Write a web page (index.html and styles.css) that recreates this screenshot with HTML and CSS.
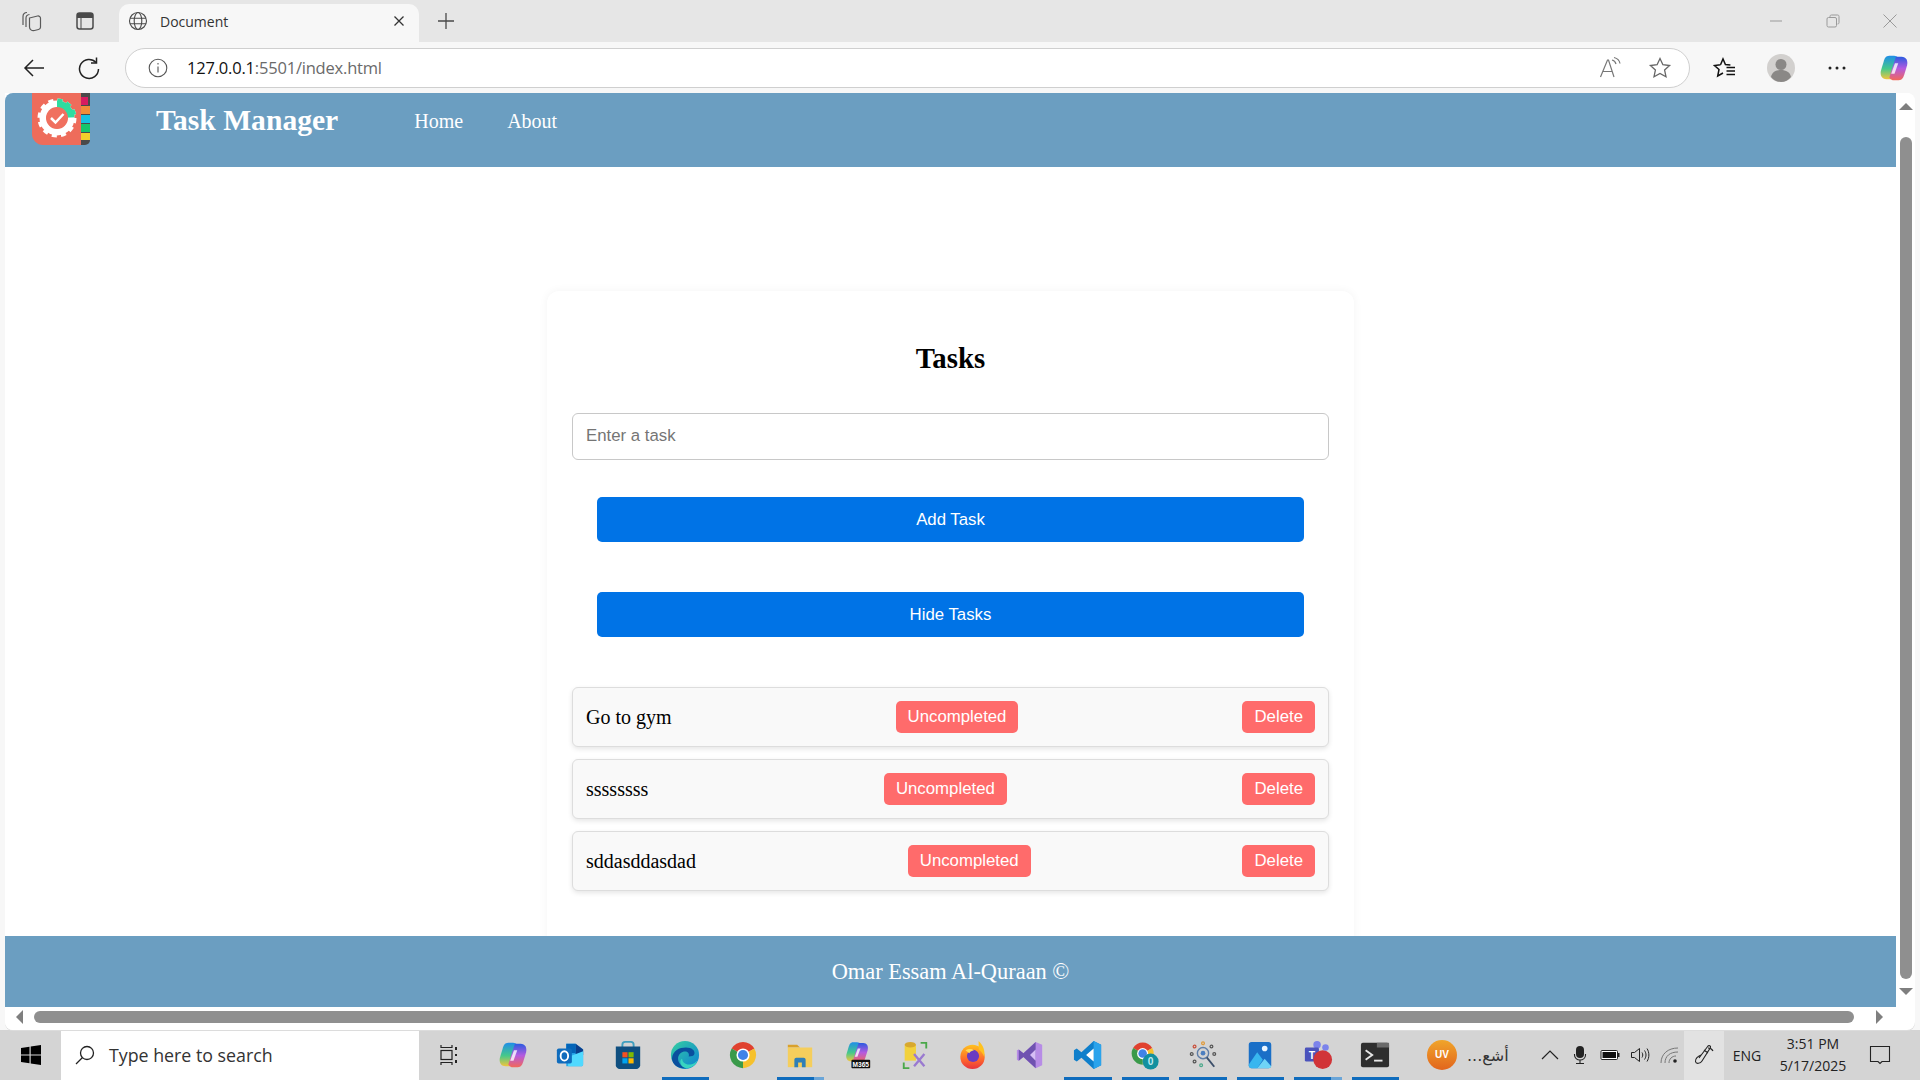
FILE: index.html
```html
<!DOCTYPE html>
<html lang="en">
<head>
<meta charset="utf-8">
<title>Document</title>
<link rel="stylesheet" href="styles.css">
</head>
<body>
<svg class="defs" width="0" height="0" aria-hidden="true">
  <defs>
    <linearGradient id="cpA" x1="0" y1="0" x2="0" y2="1"><stop offset="0" stop-color="#1f8ee8"/><stop offset=".55" stop-color="#46c98a"/><stop offset="1" stop-color="#f2c53d"/></linearGradient>
    <linearGradient id="cpB" x1="0" y1="0" x2="0" y2="1"><stop offset="0" stop-color="#2b5be0"/><stop offset=".5" stop-color="#b45be0"/><stop offset="1" stop-color="#f2685a"/></linearGradient>
    <linearGradient id="edgeA" x1="0" y1="0" x2="1" y2="1"><stop offset="0" stop-color="#35d0a0"/><stop offset="1" stop-color="#0c7fd6"/></linearGradient>
    <linearGradient id="ffA" x1="0" y1="0" x2="0" y2="1"><stop offset="0" stop-color="#ffc21f"/><stop offset=".6" stop-color="#ff6a2b"/><stop offset="1" stop-color="#e8323f"/></linearGradient>
    <clipPath id="gearTeal"><path d="M25 25L25 0H52V24Z"/></clipPath>
    <symbol id="copilot" viewBox="0 0 32 32">
      <path d="M11 3C7 3 6 6 5 9L2 19C1 24 3 28 8 28H14L21 6C20 4 18 3 16 3Z" fill="url(#cpA)"/>
      <path d="M21 29C25 29 26 26 27 23L30 13C31 8 29 4 24 4H18L11 26C12 28 14 29 16 29Z" fill="url(#cpB)"/>
      <path d="M17 11h3.500l-4 11h-3.500z" fill="#fff" opacity=".8"/>
    </symbol>
    <symbol id="chrome" viewBox="0 0 32 32">
      <path d="M16 16L3.900 9A14 14 0 0 1 28.100 9Z" fill="#e0412f"/>
      <path d="M16 16L28.100 9A14 14 0 0 1 16 30Z" fill="#f6c12c"/>
      <path d="M16 16L16 30A14 14 0 0 1 3.900 9Z" fill="#3a9a4a"/>
      <circle cx="16" cy="16" r="7" fill="#fff"/><circle cx="16" cy="16" r="5.400" fill="#3f83e8"/>
    </symbol>
  </defs>
</svg>

<div class="desktop">
  <div class="tabstrip">
    <div class="strip-icons">
      <svg class="ic22" viewBox="0 0 22 22" fill="none" stroke="#5a5a5a" stroke-width="1.200"><path d="M2 15V6.500C2 4 3.500 2.500 6 2.500M5 17V8C5 6 6.500 4.800 8.500 4.500"/><path d="M8.500 8l8-2c1.500-.3 3 .7 3 2.200v9c0 1.200-.8 2-2 2.300l-4 1c-2.800.5-5-1-5-3.500z"/></svg>
      <svg class="ic20" viewBox="0 0 20 20"><rect x="2" y="2" width="16" height="16" rx="2.500" fill="none" stroke="#4a4a4a" stroke-width="1.500"/><path d="M2 4.500C2 3 3 2 4.500 2h11C17 2 18 3 18 4.500V7H2z" fill="#4a4a4a"/><path d="M6 7v11" stroke="#4a4a4a" stroke-width="1"/></svg>
    </div>
    <div class="tab">
      <svg class="ic20" viewBox="0 0 20 20" fill="none" stroke="#4a4a4a" stroke-width="1.100"><circle cx="10" cy="10" r="8.500"/><ellipse cx="10" cy="10" rx="3.800" ry="8.500"/><path d="M2 7.200h16M2 12.800h16"/></svg>
      <span class="tab-title">Document</span>
      <svg class="tab-x" viewBox="0 0 12 12" stroke="#333" stroke-width="1.300"><path d="M1.500 1.500l9 9M10.500 1.500l-9 9"/></svg>
    </div>
    <svg class="tab-plus" viewBox="0 0 18 18" stroke="#4a4a4a" stroke-width="1.300"><path d="M9 1v16M1 9h16"/></svg>
    <div class="win-controls">
      <svg class="wc" viewBox="0 0 16 16" stroke="#9a9a9a" stroke-width="1"><path d="M2 8h12"/></svg>
      <svg class="wc" viewBox="0 0 16 16" fill="none" stroke="#9a9a9a" stroke-width="1"><rect x="2" y="4.500" width="9.500" height="9.500" rx="1.500"/><path d="M5 4.500V3.500C5 2.500 5.500 2 6.500 2h6C13.500 2 14 2.500 14 3.500v6c0 1-.5 1.500-1.500 1.500"/></svg>
      <svg class="wc" viewBox="0 0 16 16" stroke="#9a9a9a" stroke-width="1"><path d="M1.500 1.500l13 13M14.500 1.500l-13 13"/></svg>
    </div>
  </div>

  <div class="toolbar">
    <svg class="tb-ic nav-back" viewBox="0 0 24 24" fill="none" stroke="#222" stroke-width="1.500"><path d="M22 12H3M11 4l-8 8 8 8"/></svg>
    <svg class="tb-ic nav-reload" viewBox="0 0 24 24" fill="none" stroke="#222" stroke-width="1.500"><path d="M19 6.500A9.500 9.500 0 1 0 21.500 13"/><path d="M19.500 1.500v5.500H14"/></svg>
    <div class="omnibox">
      <svg class="ic20" viewBox="0 0 20 20" fill="none" stroke="#555" stroke-width="1.100"><circle cx="10" cy="10" r="8.800"/><path d="M10 8.500v6M10 5v1.500"/></svg>
      <span class="url"><span class="url-host">127.0.0.1</span>:5501/index.html</span>
      <svg class="omni-read" viewBox="0 0 24 24" fill="none" stroke="#777" stroke-width="1.200"><path d="M2.500 21L9.500 4h1L16 21M5 15.500h9"/><path d="M14 4c2 .5 3.500 2 4 4M16 1.500c3 .7 5.500 3 6 6"/></svg>
      <svg class="omni-star" viewBox="0 0 24 24" fill="none" stroke="#666" stroke-width="1.300"><path d="M12 2.500l2.900 6.200 6.700.8-5 4.600 1.400 6.700L12 17.400l-6 3.400 1.400-6.700-5-4.600 6.700-.8z"/></svg>
    </div>
    <div class="tb-right">
      <svg class="tb-ic" viewBox="0 0 24 24" fill="none" stroke="#111" stroke-width="1.500"><path d="M7.500 8.800L10 3l2.400 5.500 5 .4M7.500 8.800L1.500 9.500l4.500 4-1.300 6.500L10 17"/><path d="M13.500 11.500H22M13.500 15H22M13.500 18.500H22"/></svg>
      <div class="avatar"><svg viewBox="0 0 28 28" width="28" height="28"><circle cx="14" cy="14" r="14" fill="#d2d0ce"/><circle cx="14" cy="10.500" r="5.500" fill="#8a8886"/><path d="M4 23c1-5 5-7 10-7s9 2 10 7c-2.500 3-6 5-10 5s-7.500-2-10-5z" fill="#8a8886"/></svg></div>
      <svg class="tb-ic" viewBox="0 0 24 24" fill="#222"><circle cx="5" cy="12" r="1.500"/><circle cx="12" cy="12" r="1.500"/><circle cx="19" cy="12" r="1.500"/></svg>
      <svg class="tb-cop"><use href="#copilot"/></svg>
    </div>
  </div>

  <div class="content-frame">
    <div class="page">
      <header class="site-header">
        <svg class="logo" viewBox="0 0 60 54">
          <rect x="40" y="-6" width="18" height="58" rx="5" fill="#4a4a4a"/>
          <rect x="49" y="4" width="7" height="8" fill="#d81b60"/>
          <rect x="49" y="13" width="9" height="8" fill="#f28c38"/>
          <rect x="49" y="22" width="9" height="8" fill="#17c0e0"/>
          <rect x="49" y="31" width="9" height="8" fill="#15c56b"/>
          <rect x="49" y="40" width="9" height="7" fill="#f2cf2b"/>
          <path d="M0-6h49v58H11C5 52 0 47 0 41z" fill="#ee6c5b"/>
          <circle cx="25" cy="25" r="14" fill="none" stroke="#fff" stroke-width="7"/>
          <circle cx="25" cy="25" r="17.500" fill="none" stroke="#fff" stroke-width="4" stroke-dasharray="5 4.160"/>
          <g clip-path="url(#gearTeal)">
            <circle cx="25" cy="25" r="14" fill="none" stroke="#2fdca0" stroke-width="7"/>
            <circle cx="25" cy="25" r="17.500" fill="none" stroke="#2fdca0" stroke-width="4" stroke-dasharray="5 4.160"/>
          </g>
          <circle cx="25" cy="25" r="11" fill="#f0705f"/>
          <path d="M19 25l4.500 4.500 8-8.500" fill="none" stroke="#fff" stroke-width="2.500"/>
        </svg>
        <h1 class="brand">Task Manager</h1>
        <nav class="site-nav"><a>Home</a><a>About</a></nav>
      </header>
      <main class="site-main">
        <section class="card">
          <h2 class="card-title">Tasks</h2>
          <input class="task-input" type="text" placeholder="Enter a task">
          <button class="primary-btn first-btn">Add Task</button>
          <button class="primary-btn">Hide Tasks</button>
          <ul class="task-list">
            <li class="task"><span>Go to gym</span><button class="danger-btn">Uncompleted</button><button class="danger-btn">Delete</button></li>
            <li class="task"><span>ssssssss</span><button class="danger-btn">Uncompleted</button><button class="danger-btn">Delete</button></li>
            <li class="task"><span>sddasddasdad</span><button class="danger-btn">Uncompleted</button><button class="danger-btn">Delete</button></li>
          </ul>
        </section>
      </main>
      <footer class="site-footer">Omar Essam Al-Quraan ©</footer>
    </div>
    <div class="v-scroll">
      <span class="arrow arrow-up"></span>
      <div class="v-thumb"></div>
      <span class="arrow arrow-down"></span>
    </div>
    <div class="h-scroll">
      <span class="arrow arrow-left"></span>
      <div class="h-thumb"></div>
      <span class="arrow arrow-right"></span>
    </div>
  </div>

  <div class="taskbar">
    <div class="start"><svg viewBox="0 0 20 20" width="20" height="20" fill="#000"><path d="M0 3l8.500-1.300V9.500H0zM9.700 1.500L20 0v9.500H9.700zM0 10.500h8.500v7.800L0 17zM9.700 10.500H20V20L9.700 18.500z"/></svg></div>
    <div class="search">
      <svg viewBox="0 0 20 20" width="20" height="20" fill="none" stroke="#222" stroke-width="1.300"><circle cx="12" cy="8" r="6.500"/><path d="M7.500 12.500L1 19"/></svg>
      <span>Type here to search</span>
    </div>
    <div class="taskview"><svg viewBox="0 0 22 22" width="22" height="22" fill="none" stroke="#222" stroke-width="1.200"><path d="M3 1v2.500h11V1M3 21v-2.500h11V21"/><rect x="3" y="6.500" width="11" height="9"/><path d="M18 3v3M18 10v2M18 16v3" stroke-width="2"/></svg></div>
    <div class="apps">
      <div class="app"><svg class="app-ic"><use href="#copilot"/></svg></div>
      <div class="app"><svg class="app-ic" viewBox="0 0 32 32"><path d="M12 4h10l8 6v16c0 1-1 2-2 2H12z" fill="#28a8ea"/><path d="M12 4h10v10H12z" fill="#0364b8"/><path d="M22 4l8 6v6h-8z" fill="#0a3e8c"/><path d="M14 18l16-6v14c0 1-1 2-2 2H14z" fill="#50d9ff"/><rect x="2" y="9" width="16" height="16" rx="2" fill="#0f6cbd"/><ellipse cx="10" cy="17" rx="4" ry="5" fill="none" stroke="#fff" stroke-width="2"/></svg></div>
      <div class="app"><svg class="app-ic" viewBox="0 0 32 32"><path d="M10 8V5c0-2 1-3 3-3h6c2 0 3 1 3 3v3" fill="none" stroke="#3f9fbf" stroke-width="2"/><path d="M3 7h26v20c0 2-2 4-4 4H7c-2 0-4-2-4-4z" fill="#0f4f80"/><rect x="10" y="13" width="5.500" height="5.500" fill="#f25022"/><rect x="16.500" y="13" width="5.500" height="5.500" fill="#7fba00"/><rect x="10" y="19.500" width="5.500" height="5.500" fill="#00a4ef"/><rect x="16.500" y="19.500" width="5.500" height="5.500" fill="#ffb900"/></svg></div>
      <div class="app on"><svg class="app-ic" viewBox="0 0 32 32"><circle cx="16" cy="16" r="15" fill="url(#edgeA)"/><path d="M2 20C3 11 10 8 17 8c6 0 10 3 9 7-.5 2-3 2.500-6 2.500 1-4-2-6-6-5-5 1.500-7 7-4 12 1.500 2.500 4 4.500 7 5.500C9 31 3 27 2 20z" fill="#0a4f9e"/><path d="M13 20c0 4 4 7 9 6 3-.5 5-2 7-4-1 4-6 8-11 8-4 0-7-3-7-7 0-1 1-3 2-3z" fill="#38d5c0"/></svg><i class="bar"></i></div>
      <div class="app"><svg class="app-ic"><use href="#chrome"/></svg></div>
      <div class="app on"><svg class="app-ic" viewBox="0 0 32 32"><path d="M3 5h10l3 3H3z" fill="#d9a12c"/><rect x="3" y="8" width="26" height="21" fill="#f5ce5c"/><path d="M10 29v-8c0-1 1-2 2-2h8c1 0 2 1 2 2v8h-4v-5h-4v5z" fill="#2f7fb8"/></svg><i class="bar split"></i></div>
      <div class="app"><svg class="app-ic" viewBox="0 0 32 32"><use href="#copilot" width="26" height="26" x="2" y="0"/><rect x="9" y="21" width="20" height="9" rx="1" fill="#111"/><text x="19" y="28.500" class="m365" text-anchor="middle">M365</text></svg></div>
      <div class="app"><svg class="app-ic" viewBox="0 0 32 32"><rect x="5" y="5" width="12" height="17" fill="#f2d13c"/><ellipse cx="11" cy="5" rx="6" ry="3" fill="#d8a82e"/><path d="M22 3h6v6M4 24v6h6" fill="none" stroke="#4aa84a" stroke-width="2"/><path d="M15 28l11-13M26 28L15 15" stroke="#9a7ad0" stroke-width="2.500"/></svg></div>
      <div class="app"><svg class="app-ic" viewBox="0 0 32 32"><circle cx="15.500" cy="18" r="13" fill="url(#ffA)"/><path d="M22 1c5 5 7 10 6 17-1-3-3-6-6-8z" fill="#ffc21f"/><circle cx="16" cy="17" r="6.500" fill="#6a3bc2"/><path d="M8 11c3-2 7-2 9 0-2 1-4 1-5 3z" fill="#ffdc5a"/></svg></div>
      <div class="app"><svg class="app-ic" viewBox="0 0 32 32"><path d="M22 2l7 3v22l-7 3-13-12-5 4-2-1V11l2-1 5 4z" fill="#b78ce6"/><path d="M22 2v28L9 18l-5 4V10l5 4z" fill="#6f52b0"/><path d="M22 10v12l-6-6z" fill="#d6bdf5"/></svg></div>
      <div class="app on"><svg class="app-ic" viewBox="0 0 32 32"><path d="M22 1l8 4v22l-8 4L9 19l-5 4-3-2V11l3-2 5 4z" fill="#0f7fcb"/><path d="M22 1v30l8-4V5z" fill="#2aa3ec"/><path d="M22 9v14l-8-7z" fill="#fff"/></svg><i class="bar"></i></div>
      <div class="app on"><svg class="app-ic" viewBox="0 0 32 32"><use href="#chrome" width="27" height="27" x="0" y="1"/><circle cx="22" cy="23" r="8.500" fill="#12909f"/><text x="22" y="27" class="badge0" text-anchor="middle">0</text></svg><i class="bar"></i></div>
      <div class="app on"><svg class="app-ic" viewBox="0 0 32 32"><circle cx="16" cy="14" r="6" fill="none" stroke="#5f7ea8" stroke-width="1.500"/><circle cx="16" cy="14" r="2.500" fill="#4d7fc0"/><path d="M20 18.500l8 10" stroke="#3c4f6a" stroke-width="2"/><g fill="none" stroke-width="1.300"><circle cx="16" cy="3.500" r="1.500" stroke="#e09a3a"/><circle cx="7" cy="7" r="1.500" stroke="#c94f3a"/><circle cx="25" cy="7" r="1.500" stroke="#555"/><circle cx="4" cy="15" r="1.500" stroke="#555"/><circle cx="28" cy="15" r="1.500" stroke="#555"/><circle cx="7" cy="23" r="1.500" stroke="#555"/><circle cx="14" cy="27" r="1.500" stroke="#4aa88a"/></g></svg><i class="bar"></i></div>
      <div class="app on"><svg class="app-ic" viewBox="0 0 32 32"><rect x="4" y="2" width="24" height="28" rx="3" fill="#1a6fc7"/><circle cx="21" cy="9" r="3" fill="#e8f4ff"/><path d="M4 26l9-13 6 8-6 9H7c-2 0-3-1-3-3z" fill="#38b6ef"/><path d="M13 30l8-10 7 8c0 1-1 2-3 2z" fill="#6fd4f7"/></svg><i class="bar"></i></div>
      <div class="app on"><svg class="app-ic" viewBox="0 0 32 32"><circle cx="24" cy="8" r="3.500" fill="#7b83eb"/><circle cx="15" cy="5" r="4" fill="#7b83eb"/><rect x="2" y="8" width="15" height="15" rx="1.500" fill="#4b53bc"/><text x="9.500" y="20" class="teams-t" text-anchor="middle">T</text><circle cx="21" cy="21" r="10" fill="#d13438"/></svg><i class="bar split"></i></div>
      <div class="app on"><svg class="app-ic" viewBox="0 0 32 32"><rect x="1" y="3" width="30" height="26" rx="2" fill="#2e2e2e"/><rect x="18" y="3" width="13" height="5" fill="#6a6a6a"/><path d="M6 11l7 5-7 5" fill="none" stroke="#e6e6e6" stroke-width="2"/><path d="M15 22h9" stroke="#e6e6e6" stroke-width="2"/></svg><i class="bar"></i></div>
    </div>
    <div class="weather">
      <span class="uv">UV</span>
      <span class="weather-text" dir="rtl">أشع...</span>
    </div>
    <div class="tray">
      <svg class="tray-ic" viewBox="0 0 20 20" fill="none" stroke="#222" stroke-width="1.200"><path d="M2 14l8-8 8 8"/></svg>
      <svg class="tray-ic" viewBox="0 0 20 20"><rect x="6" y="1" width="8" height="12" rx="4" fill="#222"/><path d="M4.500 9v1c0 3 2.500 5 5.500 5s5.500-2 5.500-5V9M10 15v3.500M6 18.500h8" fill="none" stroke="#222" stroke-width="1.100"/></svg>
      <svg class="tray-ic" viewBox="0 0 20 20"><rect x="1" y="5.500" width="16.500" height="9" rx="1" fill="#fff" stroke="#222"/><rect x="2.500" y="7" width="13.500" height="6" fill="#111"/><rect x="18" y="8" width="1.500" height="4" fill="#222"/></svg>
      <svg class="tray-ic" viewBox="0 0 20 20" fill="none" stroke="#222" stroke-width="1"><path d="M1.500 7.500h3l5-4v13l-5-4h-3z"/><path d="M12 7.500c1 1.500 1 3.500 0 5M14.500 5.500c2 3 2 6 0 9M17 3.500c2.500 4 2.500 9 0 13"/></svg>
      <svg class="tray-ic" viewBox="0 0 20 20" fill="none" stroke="#777" stroke-width="1"><path d="M1 18C1 9 8 3 18 3M5 18C5 11 10 7 18 7M9 18c0-4 3-7 7-7"/><circle cx="15" cy="16" r="1.800" fill="#222" stroke="none"/></svg>
    </div>
    <div class="pen"><svg viewBox="0 0 22 22" width="22" height="22" fill="none" stroke="#222" stroke-width="1.100"><path d="M6 14L15 2c1-1 3 0 2.500 1.500L9 17c-1.500 2.500-6 3.500-6.500.5C2 15 5 12 8 11M11 6l4 3M15 4c2 0 4 1 5 3"/></svg></div>
    <span class="lang">ENG</span>
    <div class="clock"><span>3:51 PM</span><span>5/17/2025</span></div>
    <div class="notify"><svg viewBox="0 0 22 22" width="22" height="22" fill="none" stroke="#222" stroke-width="1.100"><path d="M1.500 2.500h19v15H13l-2 2-2-2H1.500z"/></svg></div>
  </div>
</div>
</body>
</html>
```
FILE: styles.css
```css
* { box-sizing: border-box; }
html, body { margin: 0; padding: 0; height: 100%; overflow: hidden; }
.defs { display: block; height: 0; width: 0; }
.desktop { width: 1920px; height: 1080px; display: flex; flex-direction: column; background: #f7f7f7; font-family: "Open Sans", sans-serif; overflow: hidden; }
.ic20 { width: 20px; height: 20px; flex: none; }
.ic22 { width: 22px; height: 22px; flex: none; }

.tabstrip { height: 42px; flex: none; background: #e6e6e6; display: flex; align-items: flex-end; }
.strip-icons { width: 119px; height: 42px; flex: none; display: flex; align-items: center; padding-left: 21px; gap: 32px; }
.tab { width: 300px; height: 38px; flex: none; background: #f7f7f7; border-radius: 10px 10px 0 0; display: flex; align-items: center; padding: 0 14px 4px 9px; margin-right: 18px; }
.tab-title { margin-left: 12px; font-size: 14px; color: #333; flex: 1; }
.tab-x { width: 12px; height: 12px; }
.tab-plus { width: 18px; height: 18px; margin-bottom: 12px; }
.win-controls { margin-left: auto; height: 42px; display: flex; align-items: center; gap: 41px; padding-right: 22px; }
.wc { width: 16px; height: 16px; }

.toolbar { height: 51px; flex: none; background: #f7f7f7; display: flex; align-items: center; padding: 0 11px 0 22px; }
.tb-ic { width: 24px; height: 24px; flex: none; }
.nav-back { margin-right: 31px; }
.nav-reload { margin-right: 24px; }
.omnibox { flex: none; width: 1565px; height: 40px; background: #fff; border: 1px solid #cfcfcf; border-radius: 20px; display: flex; align-items: center; padding: 0 17px 0 22px; margin-top: 1px; }
.url { margin-left: 19px; margin-top: -2px; font-size: 16.500px; color: #6a6a6a; flex: 1; letter-spacing: -.2px; }
.url-host { color: #111; }
.omni-read { width: 24px; height: 24px; margin-right: 26px; }
.omni-star { width: 24px; height: 24px; }
.tb-right { flex: 1; display: flex; align-items: center; justify-content: space-between; padding-left: 23px; }
.avatar { width: 28px; height: 28px; }
.tb-cop { width: 30px; height: 30px; }

.content-frame { flex: none; height: 937px; margin-left: 5px; width: 1910px; background: #fff; border-radius: 0 8px 8px 8px; box-shadow: 0 1px 0 #dcdcdc; display: grid; grid-template-columns: 1891px 19px; grid-template-rows: 914px 23px; overflow: hidden; position: relative; }
.page { display: flex; flex-direction: column; overflow: hidden; font-family: "Liberation Serif", serif; background: #fff; }
.site-header { height: 74px; flex: none; background: #6b9ec1; border-radius: 8px 0 0 0; display: flex; align-items: flex-start; padding-left: 27px; color: #fff; }
.logo { width: 60px; height: 54px; flex: none; margin-right: 64px; }
.brand { margin: 10px 0 0; font-size: 29.600px; line-height: 34px; font-weight: 700; }
.site-nav { display: flex; gap: 44px; margin: 16px 0 0 76px; font-size: 20px; line-height: 24px; }

.site-main { flex: 1; min-height: 0; padding-top: 124px; display: flex; justify-content: center; overflow: hidden; }
.card { width: 807px; flex: none; height: 760px; background: #fff; border-radius: 12px; box-shadow: 0 0 10px rgba(0, 0, 0, .05); padding: 0 25px; display: flex; flex-direction: column; align-items: center; }
.card-title { margin: 51px 0 0; font-size: 28.800px; line-height: 33px; font-weight: 700; color: #000; }
.task-input { width: 757px; height: 47px; margin-top: 38px; border: 1px solid #c8c8c8; border-radius: 6px; padding: 0 13px 2px; font: 16.800px "Liberation Sans", sans-serif; background: #fff; }
.task-input::placeholder { color: #757575; }
.primary-btn { width: 707px; height: 45px; flex: none; border: 0; border-radius: 5px; background: #0073e6; color: #fff; font: 16.800px "Liberation Sans", sans-serif; margin-top: 50px; }
.first-btn { margin-top: 37px; }
.task-list { list-style: none; margin: 50px 0 0; padding: 0; width: 757px; display: flex; flex-direction: column; gap: 12px; }
.task { height: 60px; background: #f9f9f9; border: 1px solid #ddd; border-radius: 6px; box-shadow: 0 2px 5px rgba(0, 0, 0, .1); display: flex; align-items: center; justify-content: space-between; padding: 0 13px; font-size: 20px; color: #000; }
.task span { margin-top: 1px; }
.danger-btn { height: 32px; border: 0; border-radius: 5px; background: #ff6b6b; color: #fff; padding: 0 12px 1px; font: 16.800px "Liberation Sans", sans-serif; }
.site-footer { height: 71px; flex: none; background: #6b9ec1; color: #fff; font-size: 22.400px; display: flex; align-items: center; justify-content: center; position: relative; }

.v-scroll { grid-column: 2; grid-row: 1; display: flex; flex-direction: column; align-items: center; padding: 10px 0 5px; background: #fff; }
.v-thumb { width: 12px; height: 842px; border-radius: 6px; background: #8f8f8f; margin: 27px 0 9px; }
.h-scroll { grid-column: 1; grid-row: 2; display: flex; align-items: center; padding: 0 10px 3px 11px; background: #fff; }
.h-thumb { width: 1820px; height: 12px; border-radius: 6px; background: #8f8f8f; margin: 0 22px 0 11px; }
.arrow { width: 0; height: 0; flex: none; border-style: solid; border-color: transparent; }
.arrow-up { border-width: 0 7px 7px; border-bottom-color: #7f7f7f; }
.arrow-down { border-width: 7px 7px 0; border-top-color: #7f7f7f; }
.arrow-left { border-width: 7px 7px 7px 0; border-right-color: #7f7f7f; }
.arrow-right { border-width: 7px 0 7px 7px; border-left-color: #7f7f7f; }

.taskbar { flex: none; height: 50px; background: #d4d4d4; display: flex; align-items: center; margin-top: auto; font-family: "Open Sans", sans-serif; color: #222; }
.start { width: 61px; height: 50px; flex: none; display: flex; align-items: center; justify-content: center; }
.search { width: 358px; height: 50px; flex: none; background: #fff; display: flex; align-items: center; padding-left: 14px; gap: 14px; font-size: 17.800px; color: #333; }
.taskview { width: 60px; flex: none; display: flex; justify-content: center; }
.apps { display: flex; margin-left: 5px; flex: none; }
.app { width: 57.500px; height: 50px; flex: none; display: flex; align-items: center; justify-content: center; position: relative; }
.app-ic { width: 30px; height: 30px; }
.bar { position: absolute; left: 5px; right: 5px; bottom: 0; height: 3px; background: #0f6cbd; }
.bar.split { background: linear-gradient(90deg, #0f6cbd 78%, #6aa5d8 78%); }
.m365 { font: 700 7px "Liberation Sans", sans-serif; fill: #fff; }
.badge0 { font: 700 11px "Liberation Sans", sans-serif; fill: #bfeaf0; }
.teams-t { font: 700 11px "Liberation Sans", sans-serif; fill: #fff; }
.weather { display: flex; align-items: center; margin-left: 23px; flex: none; width: 113px; }
.uv { width: 30px; height: 30px; border-radius: 50%; background: linear-gradient(#f0a52a, #e2651d); color: #fff; font: 700 10px/30px "Liberation Sans", sans-serif; text-align: center; flex: none; }
.weather-text { margin-left: 10px; font: 16px "DejaVu Sans", sans-serif; color: #333; }
.tray { display: flex; align-items: center; gap: 10px; flex: none; }
.tray-ic { width: 20px; height: 20px; }
.pen { width: 40px; height: 50px; flex: none; background: #e2e2e2; display: flex; align-items: center; justify-content: center; margin-left: 4px; }
.lang { font-size: 14px; width: 46px; text-align: center; flex: none; }
.clock { width: 86px; display: flex; flex-direction: column; align-items: center; font-size: 14px; line-height: 22px; flex: none; }
.notify { flex: 1; display: flex; justify-content: center; padding-right: 16px; }
```
